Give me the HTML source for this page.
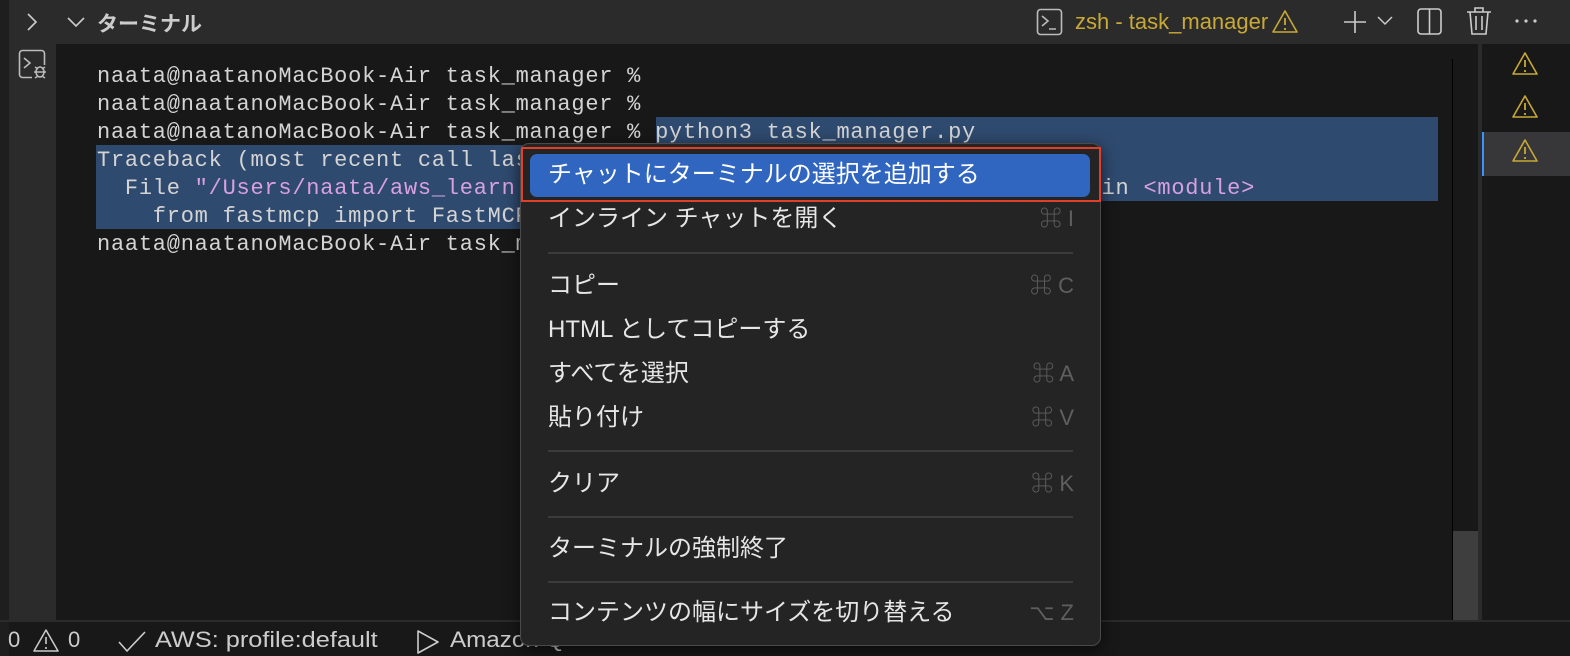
<!DOCTYPE html>
<html><head><meta charset="utf-8"><style>
*{margin:0;padding:0;box-sizing:border-box}
body{width:1570px;height:656px;overflow:hidden;background:#181818;position:relative;font-family:"Liberation Sans","Noto Sans CJK JP",sans-serif;color:#ccc}
.a{position:absolute}
.mono{font-family:"Liberation Mono","Noto Sans CJK JP",monospace;font-size:22px;letter-spacing:0.75px;color:#d4d4d4;white-space:pre;line-height:28px}
.sel{background:#2f4a6f}
.mi{position:absolute;left:548px;font-size:24px;color:#e6e6e6;line-height:30px;white-space:nowrap}
.sc{position:absolute;right:496px;font-size:22px;color:#5f5f5f;line-height:30px;text-align:right}
.sep{position:absolute;left:548px;width:525px;height:2px;background:#3c3c3c}
.st{position:absolute;top:627px;font-size:22px;color:#ccc;white-space:pre}
</style></head><body>
<div class="a" style="left:0;top:0;width:1570px;height:44px;background:#2b2b2b"></div>
<div class="a" style="left:0;top:0;width:9px;height:656px;background:#1e1e1e"></div>
<div class="a" style="left:9px;top:44px;width:47px;height:578px;background:#2b2b2b"></div>
<svg class="a" style="left:24px;top:10px" width="16" height="24"><path d="M4 4l8 8-8 8" stroke="#ccc" stroke-width="1.6" fill="none"/></svg>
<svg class="a" style="left:66px;top:14px" width="20" height="16"><path d="M2 4l8 8 8-8" stroke="#ccc" stroke-width="1.6" fill="none"/></svg>
<div class="a" style="left:97px;top:8px;font-size:21px;font-weight:bold;color:#ccc">ターミナル</div>
<svg class="a" style="left:18px;top:49px" width="32" height="32"><rect x="1.5" y="1.5" width="25" height="27" rx="3" stroke="#bbb" stroke-width="1.6" fill="none"/><path d="M6 9l6 5-6 5" stroke="#bbb" stroke-width="1.6" fill="none"/><rect x="14" y="16" width="16" height="14" fill="#2b2b2b"/><ellipse cx="22" cy="23" rx="4" ry="5" stroke="#bbb" stroke-width="1.6" fill="none"/><path d="M16 23h12M17 18l3 2M27 18l-3 2M17 29l3-2M27 29l-3-2" stroke="#bbb" stroke-width="1.4"/></svg>
<svg class="a" style="left:1036px;top:8px" width="28" height="28"><rect x="1.5" y="1.5" width="24" height="25" rx="3" stroke="#bbb" stroke-width="1.6" fill="none"/><path d="M6 8l6 5-6 5M13 21h7" stroke="#bbb" stroke-width="1.6" fill="none"/></svg>
<div class="a" style="left:1075px;top:9px;font-size:22px;color:#c9a935">zsh - task_manager</div>
<svg class="a" style="left:1271px;top:9px" width="28" height="26"><path d="M14 2L26 23H2Z" stroke="#c9a935" stroke-width="1.6" fill="none" stroke-linejoin="round"/><path d="M14 9v7M14 19v2" stroke="#c9a935" stroke-width="1.8"/></svg>
<svg class="a" style="left:1342px;top:9px" width="26" height="26"><path d="M13 2v22M2 13h22" stroke="#ccc" stroke-width="1.6"/></svg>
<svg class="a" style="left:1375px;top:14px" width="20" height="14"><path d="M3 3l7 7 7-7" stroke="#ccc" stroke-width="1.5" fill="none"/></svg>
<svg class="a" style="left:1416px;top:7px" width="28" height="30"><rect x="2" y="2" width="23" height="25" rx="3" stroke="#ccc" stroke-width="1.6" fill="none"/><path d="M13.5 2v25" stroke="#ccc" stroke-width="1.6"/></svg>
<svg class="a" style="left:1464px;top:5px" width="30" height="32"><path d="M3 7h24M11 7V3h8v4M6 7l2 22h14l2-22M12 11v14M18 11v14" stroke="#ccc" stroke-width="1.6" fill="none"/></svg>
<svg class="a" style="left:1514px;top:18px" width="24" height="6"><circle cx="3" cy="3" r="1.6" fill="#ccc"/><circle cx="12" cy="3" r="1.6" fill="#ccc"/><circle cx="21" cy="3" r="1.6" fill="#ccc"/></svg>
<div class="a sel" style="left:656px;top:117px;width:782px;height:28px"></div>
<div class="a sel" style="left:96px;top:145px;width:1342px;height:56px"></div>
<div class="a sel" style="left:96px;top:201px;width:424px;height:28px"></div>
<div class="a mono" style="left:97px;top:63px">naata@naatanoMacBook-Air task_manager %
naata@naatanoMacBook-Air task_manager %
naata@naatanoMacBook-Air task_manager % python3 task_manager.py
Traceback (most recent call last):
  File <span style="color:#d8a0df">"/Users/naata/aws_learn</span>                                          in <span style="color:#d8a0df">&lt;module&gt;</span>
    from fastmcp import FastMCP
naata@naatanoMacBook-Air task_manager %</div>
<div class="a" style="left:1452px;top:59px;width:1px;height:563px;background:#000"></div>
<div class="a" style="left:1453px;top:531px;width:25px;height:91px;background:#3e3e3e"></div>
<div class="a" style="left:1478px;top:44px;width:4px;height:578px;background:#2b2b2b"></div>
<div class="a" style="left:1482px;top:132px;width:88px;height:44px;background:#37373a"></div>
<div class="a" style="left:1482px;top:132px;width:2px;height:44px;background:#3794ff"></div>
<svg class="a" style="left:1511px;top:51px" width="28" height="26"><path d="M14 2L26 23H2Z" stroke="#c9a935" stroke-width="1.6" fill="none" stroke-linejoin="round"/><path d="M14 9v7M14 19v2" stroke="#c9a935" stroke-width="1.8"/></svg>
<svg class="a" style="left:1511px;top:94px" width="28" height="26"><path d="M14 2L26 23H2Z" stroke="#c9a935" stroke-width="1.6" fill="none" stroke-linejoin="round"/><path d="M14 9v7M14 19v2" stroke="#c9a935" stroke-width="1.8"/></svg>
<svg class="a" style="left:1511px;top:138px" width="28" height="26"><path d="M14 2L26 23H2Z" stroke="#c9a935" stroke-width="1.6" fill="none" stroke-linejoin="round"/><path d="M14 9v7M14 19v2" stroke="#c9a935" stroke-width="1.8"/></svg>
<div class="a" style="left:0;top:620px;width:1570px;height:2px;background:#2b2b2b"></div>
<div class="st" style="left:8px">0</div>
<svg class="a" style="left:32px;top:628px" width="28" height="26"><path d="M14 2L26 23H2Z" stroke="#ccc" stroke-width="1.5" fill="none" stroke-linejoin="round"/><path d="M14 9v7M14 19v2" stroke="#ccc" stroke-width="1.6"/></svg>
<div class="st" style="left:68px">0</div>
<svg class="a" style="left:117px;top:630px" width="30" height="24"><path d="M2 12l8 9L28 2" stroke="#ccc" stroke-width="1.6" fill="none"/></svg>
<div class="st" style="left:155px;transform:scaleX(1.15);transform-origin:left">AWS: profile:default</div>
<svg class="a" style="left:415px;top:629px" width="26" height="26"><path d="M3 2l20 11L3 24Z" stroke="#ccc" stroke-width="1.6" fill="none" stroke-linejoin="round"/></svg>
<div class="st" style="left:450px;transform:scaleX(1.1);transform-origin:left">Amazon Q</div>
<div class="a" style="left:520px;top:143px;width:581px;height:503px;background:#242424;border:1px solid #4a4a4a;border-radius:9px;box-shadow:0 4px 16px rgba(0,0,0,.6)"></div>
<div class="a" style="left:530px;top:154px;width:560px;height:43px;background:#3066c0;border-radius:7px"></div>
<div class="a" style="left:521px;top:147px;width:580px;height:55px;border:2px solid #e0402a"></div>
<div class="mi" style="top:160px;color:#fff">チャットにターミナルの選択を追加する</div>
<div class="mi" style="top:204px">インライン チャットを開く</div><div class="sc" style="top:204px">⌘ I</div>
<div class="sep" style="top:252px"></div>
<div class="mi" style="top:271px">コピー</div><div class="sc" style="top:271px">⌘ C</div>
<div class="mi" style="top:315px">HTML としてコピーする</div>
<div class="mi" style="top:359px">すべてを選択</div><div class="sc" style="top:359px">⌘ A</div>
<div class="mi" style="top:403px">貼り付け</div><div class="sc" style="top:403px">⌘ V</div>
<div class="sep" style="top:450px"></div>
<div class="mi" style="top:469px">クリア</div><div class="sc" style="top:469px">⌘ K</div>
<div class="sep" style="top:516px"></div>
<div class="mi" style="top:534px">ターミナルの強制終了</div>
<div class="sep" style="top:581px"></div>
<div class="mi" style="top:598px">コンテンツの幅にサイズを切り替える</div><div class="sc" style="top:598px">⌥ Z</div>
</body></html>
